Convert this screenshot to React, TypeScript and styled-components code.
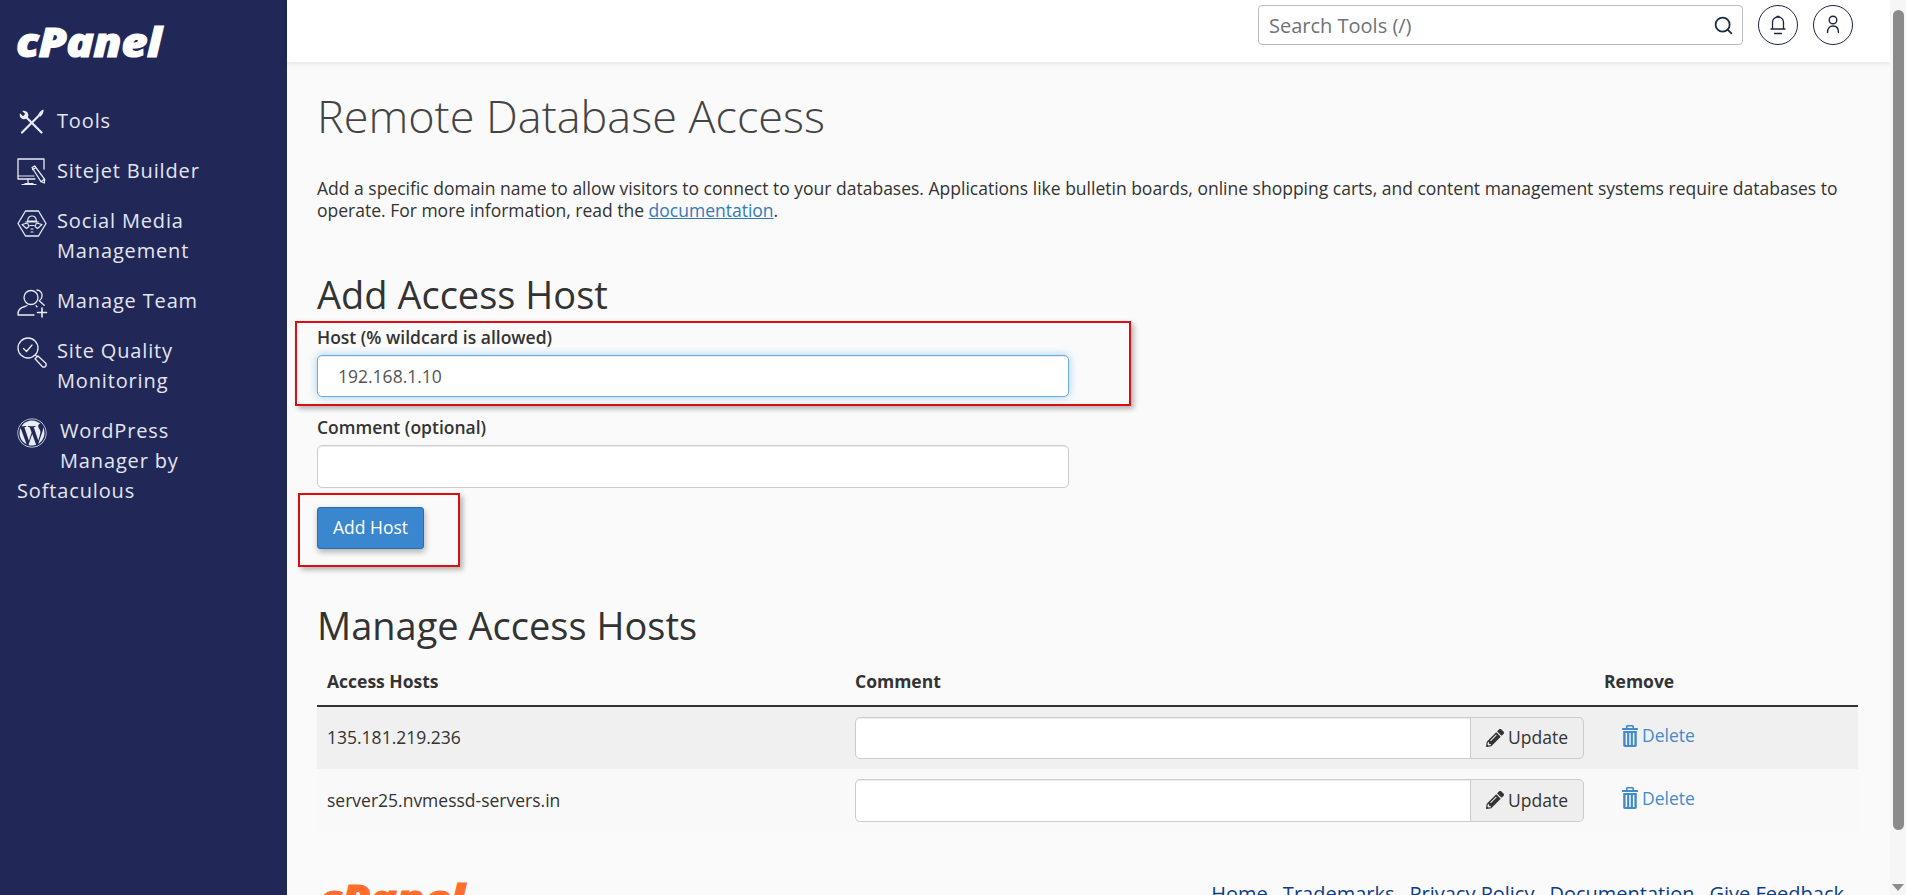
import React, { FC, ReactNode } from 'react';
import styled, { createGlobalStyle } from 'styled-components';
import { FaPencilAlt, FaWordpress } from 'react-icons/fa';
import { Search } from 'lucide-react';

const GlobalStyle = createGlobalStyle`
  html, body {
    margin: 0;
    height: 100%;
    overflow: hidden;
  }
  body {
    font-family: "Open Sans", "Liberation Sans", sans-serif;
    font-size: 17.5px;
    line-height: 25px;
    color: #333;
    background: #fafafa;
  }
  * {
    box-sizing: border-box;
  }
`;

const Page = styled.div`
  display: flex;
  height: 895px;
  overflow: hidden;
`;

const Sidebar = styled.nav`
  flex: 0 0 287px;
  background: #212858;
  color: #e3e6f1;
`;

const Brand = styled.div<{ $color: string; $size: number }>`
  display: inline-block;
  transform: scaleX(1.14);
  transform-origin: left center;
  font-size: ${({ $size }) => $size}px;
  line-height: 48px;
  font-weight: 800;
  font-style: italic;
  letter-spacing: -0.5px;
  color: ${({ $color }) => $color};
  -webkit-text-stroke: 1px ${({ $color }) => $color};
`;

const LogoRow = styled.div`
  height: 106px;
  padding: 18px 0 0 16px;
`;

const MenuItem = styled.a`
  display: block;
  margin: 0 0 20px;
  padding: 0 60px 0 17px;
  font-size: 20px;
  line-height: 30px;
  letter-spacing: 0.85px;
`;

const MenuIcon = styled.span<{ $gap?: number }>`
  float: left;
  width: 30px;
  height: 36px;
  margin-right: ${({ $gap }) => $gap ?? 10}px;
  padding-top: 2px;
  color: #e9ecf5;
  svg {
    display: block;
    width: 30px;
    height: 30px;
    overflow: visible;
  }
`;

const Main = styled.div`
  flex: 1;
  min-width: 0;
  display: flex;
  flex-direction: column;
`;

const Header = styled.header`
  flex: 0 0 62px;
  display: flex;
  justify-content: flex-end;
  gap: 15px;
  padding: 5px 37px 0 0;
  background: #fff;
  box-shadow: 0 1px 5px rgba(0, 0, 0, 0.12);
`;

const SearchBox = styled.label`
  display: flex;
  align-items: center;
  width: 485px;
  height: 40px;
  padding: 0 8px 0 10px;
  border: 1px solid #b9bcc4;
  border-radius: 4px;
  color: #1c2b3a;
`;

const SearchInput = styled.input`
  flex: 1;
  padding: 0;
  border: none;
  outline: none;
  background: transparent;
  font: inherit;
  font-size: 20px;
  color: #333;
  &::placeholder {
    color: #6f7277;
    opacity: 1;
  }
`;

const RoundButton = styled.button`
  display: flex;
  align-items: center;
  justify-content: center;
  width: 40px;
  height: 40px;
  padding: 0;
  border: 1px solid #1d2440;
  border-radius: 50%;
  background: #fff;
  color: #1d2440;
`;

const Content = styled.main`
  flex: 1;
  padding: 0 32px 0 30px;
`;

const Title = styled.h1`
  margin: 27px 0 0;
  font-size: 45px;
  line-height: 54px;
  font-weight: 300;
  color: #444;
`;

const Intro = styled.p`
  margin: 33.5px 0 0;
  font-size: 17.5px;
  line-height: 22px;
`;

const DocLink = styled.a`
  color: #337ab7;
  text-decoration: underline;
`;

const SectionTitle = styled.h2<{ $top: number }>`
  margin: ${({ $top }) => $top}px 0 0;
  font-size: 38px;
  line-height: 45px;
  font-weight: 400;
  color: #333;
`;

const Field = styled.div<{ $top: number }>`
  position: relative;
  margin-top: ${({ $top }) => $top}px;
  width: 752px;
`;

const Label = styled.label`
  display: block;
  font-weight: 600;
  margin-bottom: 5px;
`;

const TextInput = styled.input<{ $focused?: boolean }>`
  display: block;
  width: 100%;
  height: 42.5px;
  padding: 0 ${({ $focused }) => ($focused ? 20 : 15)}px;
  font: inherit;
  color: #555;
  background: #fff;
  border: 1px solid ${({ $focused }) => ($focused ? '#66afe9' : '#ccc')};
  border-radius: 5px;
  outline: none;
  box-shadow: inset 0 1px 1px rgba(0, 0, 0, 0.075)
    ${({ $focused }) => ($focused ? ', 0 0 8px rgba(102, 175, 233, 0.6)' : '')};
`;

const RedBox = styled.div<{ $left: number; $top: number; $width: number; $height: number }>`
  position: absolute;
  left: ${({ $left }) => $left}px;
  top: ${({ $top }) => $top}px;
  width: ${({ $width }) => $width}px;
  height: ${({ $height }) => $height}px;
  border: 2.5px solid #d90f14;
  box-shadow: 3px 3px 5px rgba(0, 0, 0, 0.28);
  pointer-events: none;
`;

const ButtonRow = styled.div`
  position: relative;
  margin-top: 19px;
  width: 107px;
`;

const PrimaryButton = styled.button`
  display: block;
  width: 107px;
  height: 42.5px;
  padding: 0;
  font: inherit;
  color: #fff;
  background: #3a87cf;
  border: 1px solid #2e6da4;
  border-radius: 3px;
  box-shadow: 1px 3px 6px rgba(0, 0, 0, 0.3);
`;

const HostsTable = styled.table`
  width: 100%;
  margin-top: 10.5px;
  border-collapse: collapse;
  table-layout: fixed;
`;

const HeadCell = styled.th<{ $width?: number }>`
  width: ${({ $width }) => ($width ? `${$width}px` : 'auto')};
  padding: 10px 10px 11px;
  text-align: left;
  font-weight: 700;
  line-height: 25px;
  border-bottom: 2.5px solid #333;
`;

const Row = styled.tr<{ $striped?: boolean }>`
  background: ${({ $striped }) => ($striped ? '#f0f0f0' : '#f9f9f9')};
  & + & td {
    border-top: 1px solid #ddd;
  }
`;

const Cell = styled.td`
  padding: 10px;
  vertical-align: middle;
`;

const InputGroup = styled.div`
  display: flex;
  width: 729px;
`;

const GroupInput = styled(TextInput)`
  flex: 1;
  border-radius: 5px 0 0 5px;
`;

const UpdateButton = styled.button`
  display: flex;
  align-items: center;
  justify-content: center;
  gap: 4px;
  flex: 0 0 114px;
  height: 42.5px;
  margin-left: -1px;
  padding: 0;
  font: inherit;
  color: #333;
  background: #eee;
  border: 1px solid #ccc;
  border-radius: 0 5px 5px 0;
`;

const DeleteLink = styled.a`
  display: inline-flex;
  align-items: center;
  gap: 4px;
  margin-left: 18px;
  color: #428bca;
`;

const Footer = styled.footer`
  display: flex;
  justify-content: space-between;
  align-items: flex-start;
  margin-top: 37px;
  padding: 12px 0 0 2px;
`;

const FooterLogo = styled.div`
  margin-top: -6px;
`;

const FooterLinks = styled.div`
  display: flex;
  gap: 15px;
  padding-right: 14px;
  font-size: 20px;
`;

const FooterLink = styled.a`
  color: #0f3d83;
`;

const Scrollbar = styled.div`
  flex: 0 0 16px;
  display: flex;
  flex-direction: column;
  align-items: center;
  padding-top: 10px;
  background: #f6f6f6;
`;

const ScrollThumb = styled.div`
  width: 11px;
  height: 820px;
  border-radius: 6px;
  background: #8b8b8b;
`;

const ScrollArrow = styled.div`
  margin-top: 54px;
  border-left: 6px solid transparent;
  border-right: 6px solid transparent;
  border-top: 7px solid #8b8b8b;
`;

const line = { fill: 'none', stroke: 'currentColor', strokeWidth: 1.3, strokeLinecap: 'round', strokeLinejoin: 'round' } as const;

const ToolsIcon = () => (
  <svg viewBox="0 0 30 30" {...line} strokeWidth={2.2}>
    <path
      d="M5.2 3L8.2 6L6 8.2L3 5.2C2.2 7.5 3 10 5.5 11C7 11.5 8.5 11.4 9.8 10.6L10.6 9.8C11.4 8.5 11.5 7 11 5.5C10 3 7.5 2.2 5.2 3Z"
      fill="currentColor"
      stroke="none"
    />
    <path d="M9.5 9.5L24.5 24.5" />
    <path d="M21.5 8L5 24.5" />
    <path d="M26.5 1.5c.5 2.5-1 5.3-3.3 7.3l-2.1-2c1.2-2.4 3-4.6 5.4-5.3z" fill="currentColor" stroke="none" />
  </svg>
);

const SitejetIcon = () => (
  <svg viewBox="0 0 30 30" {...line}>
    <path d="M27 11V1H1v20h17" />
    <path d="M1 18h16M11 21v4M8 25.5h8" strokeWidth={1.2} />
    <path d="M5 26.5h14" strokeWidth={1.2} />
    <path d="M15 9.5l2.7-1.5 10 13.3-.4 3.7-3.4-1.5z" />
    <path d="M15.6 11.6l2.8-1.6M24 23.7l3.3-2.3" />
  </svg>
);

const SocialIcon = () => (
  <svg viewBox="0 0 30 30" {...line} strokeWidth={1.1}>
    <path d="M8.5 3h13L29 15.5 21.5 28h-13L1 15.5z" strokeWidth={1.3} />
    <path d="M10.5 13c.4-3.3 2.2-5 4.5-5s4.1 1.7 4.5 5zM8.5 14h13" />
    <path d="M5 16.5l5.5-1.5 1.5 3.5-2.5 2zM25 16.5l-5.5-1.5-1.5 3.5 2.5 2z" />
    <path d="M13 17.5h4M14 21h2M14 24h2" />
  </svg>
);

const TeamIcon = () => (
  <svg viewBox="0 0 30 30" {...line}>
    <circle cx="14" cy="9.5" r="7" />
    <path d="M20 2c3.5.3 5.5 3 5 6.5-.3 2-1.3 3.5-2.8 4.3l5 4.5" />
    <path d="M1 27c-.4-4.5 2.8-7.5 7-8.5l2-1M19 17.8l1 1M1 27h16" />
    <path d="M25 20v9M20.5 24.5h9" strokeWidth={1.6} />
  </svg>
);

const QualityIcon = () => (
  <svg viewBox="0 0 30 30" {...line}>
    <circle cx="11" cy="10" r="10" />
    <path d="M6.5 10.5l3 3 5.5-6.5" />
    <path d="M18.5 17.5l2.5 1M21 18l7.5 7c1 1.2 1 2.5-.1 3.5-1 .9-2.3.8-3.4-.3l-7-7.5z" />
  </svg>
);

const BellIcon = () => (
  <svg width="20" height="24" viewBox="0 0 20 24" fill="none" stroke="currentColor" strokeWidth="1.3" strokeLinecap="round">
    <path d="M4.5 16V9.5c0-3.2 2.4-5.5 5.5-5.5s5.5 2.3 5.5 5.5V16zM3 16h14" />
    <path d="M6.5 20.5h7" />
    <path d="M9 3.5h2" />
  </svg>
);

const UserIcon = () => (
  <svg width="20" height="24" viewBox="0 0 20 24" fill="none" stroke="currentColor" strokeWidth="1.4" strokeLinecap="round">
    <circle cx="10" cy="7" r="3.8" />
    <path d="M4.5 19.5c0-4.4 2.2-6.5 5.5-6.5s5.5 2.1 5.5 6.5" />
  </svg>
);

const TrashIcon = () => (
  <svg width="16" height="22" viewBox="0 0 16 22" fill="currentColor">
    <path d="M5.5 0h5c.8 0 1.500.7 1.500 1.500V3h3.300c.4 0 .7.300.7.700V5H0V3.700C0 3.300.3 3 .7 3H4V1.500C4 .7 4.700 0 5.500 0zm.1 1.400V3h4.800V1.400z" />
    <path fillRule="evenodd" d="M1.200 6h13.600v14.300c0 .9-.7 1.700-1.600 1.700H2.800c-.9 0-1.600-.8-1.600-1.700zM3.600 8v12h1.500V8zm3.650 0v12h1.500V8zm3.650 0v12h1.500V8z" />
  </svg>
);

interface NavEntry {
  label: string;
  icon: ReactNode;
  gap?: number;
}

const navEntries: NavEntry[] = [
  { label: 'Tools', icon: <ToolsIcon /> },
  { label: 'Sitejet Builder', icon: <SitejetIcon /> },
  { label: 'Social Media Management', icon: <SocialIcon /> },
  { label: 'Manage Team', icon: <TeamIcon /> },
  { label: 'Site Quality Monitoring', icon: <QualityIcon /> },
  { label: 'WordPress Manager by Softaculous', icon: <FaWordpress />, gap: 13 },
];

const hosts = ['135.181.219.236', 'server25.nvmessd-servers.in'];
const footerLinks = ['Home', 'Trademarks', 'Privacy Policy', 'Documentation', 'Give Feedback'];

const App: FC = () => (
  <Page>
    <GlobalStyle />
    <Sidebar>
      <LogoRow>
        <Brand $color="#fff" $size={40}>cPanel</Brand>
      </LogoRow>
      {navEntries.map(({ label, icon, gap }) => (
        <MenuItem key={label}>
          <MenuIcon $gap={gap}>{icon}</MenuIcon>
          {label}
        </MenuItem>
      ))}
    </Sidebar>
    <Main>
      <Header>
        <SearchBox>
          <SearchInput placeholder="Search Tools (/)" />
          <Search size={21} strokeWidth={2} />
        </SearchBox>
        <RoundButton aria-label="Notifications">
          <BellIcon />
        </RoundButton>
        <RoundButton aria-label="Account">
          <UserIcon />
        </RoundButton>
      </Header>
      <Content>
        <Title>Remote Database Access</Title>
        <Intro>
          Add a specific domain name to allow visitors to connect to your databases. Applications like bulletin boards,
          online shopping carts, and content management systems require databases to operate. For more information, read
          the <DocLink>documentation</DocLink>.
        </Intro>
        <SectionTitle $top={51}>Add Access Host</SectionTitle>
        <Field $top={8}>
          <RedBox $left={-22} $top={-4} $width={836} $height={85} />
          <Label>Host (% wildcard is allowed)</Label>
          <TextInput $focused defaultValue="192.168.1.10" />
        </Field>
        <Field $top={18}>
          <Label>Comment (optional)</Label>
          <TextInput />
        </Field>
        <ButtonRow>
          <RedBox $left={-19} $top={-14} $width={162} $height={74} />
          <PrimaryButton>Add Host</PrimaryButton>
        </ButtonRow>
        <SectionTitle $top={54}>Manage Access Hosts</SectionTitle>
        <HostsTable>
          <thead>
            <tr>
              <HeadCell $width={528}>Access Hosts</HeadCell>
              <HeadCell $width={749}>Comment</HeadCell>
              <HeadCell>Remove</HeadCell>
            </tr>
          </thead>
          <tbody>
            {hosts.map((host, index) => (
              <Row key={host} $striped={index === 0}>
                <Cell>{host}</Cell>
                <Cell>
                  <InputGroup>
                    <GroupInput />
                    <UpdateButton>
                      <FaPencilAlt size={18} />
                      Update
                    </UpdateButton>
                  </InputGroup>
                </Cell>
                <Cell>
                  <DeleteLink>
                    <TrashIcon />
                    Delete
                  </DeleteLink>
                </Cell>
              </Row>
            ))}
          </tbody>
        </HostsTable>
        <Footer>
          <FooterLogo>
            <Brand $color="#ff6c2c" $size={40}>cPanel</Brand>
          </FooterLogo>
          <FooterLinks>
            {footerLinks.map(link => (
              <FooterLink key={link}>{link}</FooterLink>
            ))}
          </FooterLinks>
        </Footer>
      </Content>
    </Main>
    <Scrollbar>
      <ScrollThumb />
      <ScrollArrow />
    </Scrollbar>
  </Page>
);

export default App;
